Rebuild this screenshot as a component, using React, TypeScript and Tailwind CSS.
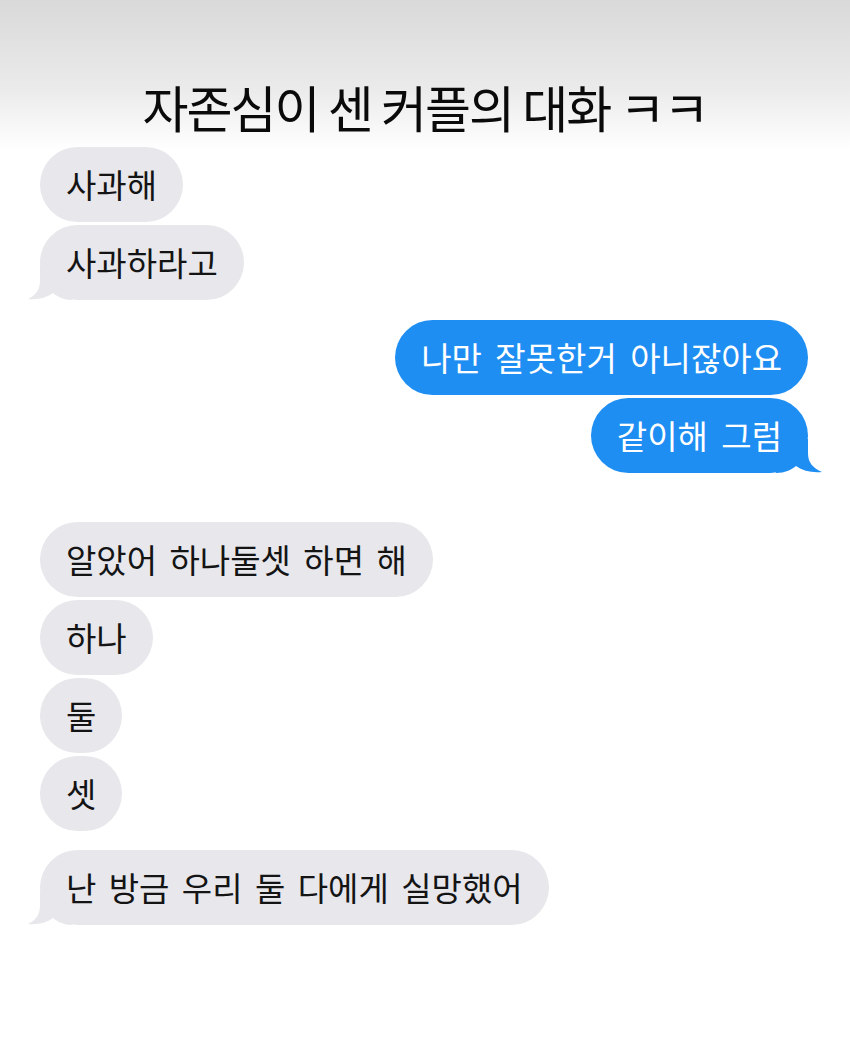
import React from 'react';

type Side = 'left' | 'right';

type Message = {
  side: Side;
  text: string;
  tail?: boolean;
  gapBefore?: string;
};

const messages: Message[] = [
  { side: 'left', text: '사과해', gapBefore: 'mt-0' },
  { side: 'left', text: '사과하라고', tail: true },
  { side: 'right', text: '나만 잘못한거 아니잖아요', gapBefore: 'mt-[20px]' },
  { side: 'right', text: '같이해 그럼', tail: true },
  { side: 'left', text: '알았어 하나둘셋 하면 해', gapBefore: 'mt-[49px]' },
  { side: 'left', text: '하나' },
  { side: 'left', text: '둘' },
  { side: 'left', text: '셋' },
  { side: 'left', text: '난 방금 우리 둘 다에게 실망했어', tail: true, gapBefore: 'mt-[19px]' },
];

const Tail: React.FC<{ side: Side }> = ({ side }) => {
  if (side === 'left') {
    return (
      <svg
        className="absolute -left-[12px] bottom-0"
        width="44"
        height="34"
        viewBox="0 0 44 34"
      >
        <path
          d="M12 0 L12 14 C12 24 8 29 0 33 C10 34 18 32 25 27 C30 31 36 34 44 34 L44 0 Z"
          fill="#e7e7ec"
        />
      </svg>
    );
  }
  return (
    <svg
      className="absolute -right-[14px] bottom-0"
      width="46"
      height="34"
      viewBox="0 0 46 34"
    >
      <path
        d="M32 0 L32 14 C32 24 37 29 46 33 C36 34 27 32 20 27 C15 31 9 34 0 34 L0 0 Z"
        fill="#1f8ef3"
      />
    </svg>
  );
};

const Bubble: React.FC<{ message: Message }> = ({ message }) => {
  const isLeft = message.side === 'left';
  return (
    <div
      className={`flex ${isLeft ? 'justify-start' : 'justify-end'} ${message.gapBefore ?? 'mt-[3px]'}`}
    >
      <div
        className={`relative h-[75px] rounded-full px-[26px] flex items-center text-[33px] leading-none whitespace-nowrap [word-spacing:5px] ${
          isLeft ? 'bg-[#e7e7ec] text-[#141414]' : 'bg-[#1f8ef3] text-white [word-spacing:6px]'
        }`}
      >
        {message.tail && <Tail side={message.side} />}
        <span className="relative">{message.text}</span>
      </div>
    </div>
  );
};

export default function App() {
  return (
    <div
      className="w-[850px] min-h-[1048px] bg-[linear-gradient(to_bottom,#d9d9d9_0px,#ebebeb_90px,#ffffff_150px)]"
      style={{ fontFamily: '"Noto Sans CJK KR", "Noto Sans", sans-serif' }}
    >
      <h1 className="pt-[75px] text-center text-[50px] leading-[62px] font-normal tracking-[-0.04em] text-[#0a0a0a]">
        자존심이 센 커플의 대화 ㅋㅋ
      </h1>
      <div className="pl-[40px] pr-[42px] pt-[10px]">
        {messages.map((m, i) => (
          <Bubble key={i} message={m} />
        ))}
      </div>
    </div>
  );
}
